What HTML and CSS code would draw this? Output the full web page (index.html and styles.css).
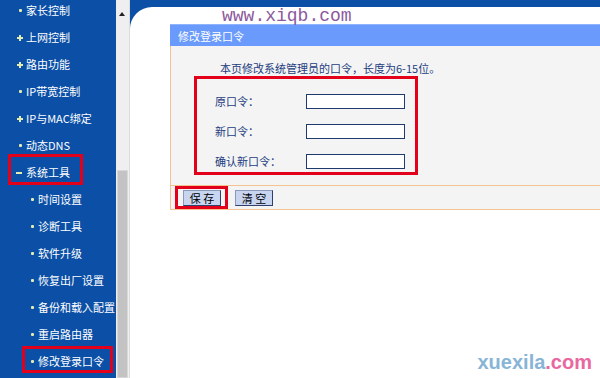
FILE: index.html
```html
<!DOCTYPE html>
<html lang="zh-CN">
<head>
  <meta charset="UTF-8" />
  <title>修改登录口令</title>
  <link rel="stylesheet" href="styles.css">
</head>
<body>
  <div class="nav">
    <ul class="menu">
      <li class="dot">家长控制</li>
      <li class="plus">上网控制</li>
      <li class="plus">路由功能</li>
      <li class="dot">IP带宽控制</li>
      <li class="plus">IP与MAC绑定</li>
      <li class="dot">动态DNS</li>
      <li class="minus">系统工具<span class="mark mark-group"></span></li>
      <li class="sub">时间设置</li>
      <li class="sub">诊断工具</li>
      <li class="sub">软件升级</li>
      <li class="sub">恢复出厂设置</li>
      <li class="sub">备份和载入配置</li>
      <li class="sub">重启路由器</li>
      <li class="sub">修改登录口令<span class="mark mark-item"></span></li>
    </ul>
  </div>

  <div class="scrollbar">
    <div class="scroll-up"></div>
    <div class="scroll-track"></div>
    <div class="scroll-thumb"></div>
  </div>

  <div class="main">
    <div class="page">
      <div class="site-mark">www.xiqb.com</div>

      <div class="panel">
        <div class="panel-title">修改登录口令</div>
        <div class="panel-body">
          <p class="intro">本页修改系统管理员的口令，长度为6-15位。</p>
          <div class="fields">
            <div class="field">
              <label>原口令：</label>
              <input type="password" />
            </div>
            <div class="field">
              <label>新口令：</label>
              <input type="password" />
            </div>
            <div class="field">
              <label>确认新口令：</label>
              <input type="password" />
            </div>
          </div>
        </div>
        <div class="btn-row">
          <span class="btn-mark"><button class="btn">保 存</button></span>
          <button class="btn">清 空</button>
        </div>
      </div>

      <div class="footer-mark"><span class="fm-blue">xuexila</span><span class="fm-pink">.com</span></div>
    </div>
  </div>
</body>
</html>
```

FILE: styles.css
```css
* { box-sizing: border-box; }
html, body { margin: 0; height: 378px; overflow: hidden; }
body { display: flex; font-family: "Noto Sans CJK SC", "Liberation Sans", sans-serif; font-size: 11px; background: #fff; }

/* left menu */
.nav { width: 116px; background: #0b4fa6; color: #fff; }
.menu { list-style: none; margin: -3px 0 0; padding: 0; }
.menu li { position: relative; height: 27px; line-height: 27px; padding-left: 26px; white-space: nowrap; }
.menu li::before { content: ""; position: absolute; background: #e4edb0; }
.menu li.dot::before { left: 19px; top: 12px; width: 3px; height: 3px; border-radius: 1px; }
.menu li.plus::before { left: 17px; top: 13px; width: 6px; height: 2px; box-shadow: 0 0 0 0 #e4edb0; }
.menu li.plus::after { content: ""; position: absolute; left: 19px; top: 11px; width: 2px; height: 6px; background: #e4edb0; }
.menu li.minus::before { left: 16px; top: 13px; width: 6px; height: 2px; }
.menu li.sub { padding-left: 38px; }
.menu li.sub::before { left: 31px; top: 12px; width: 3px; height: 3px; border-radius: 1px; }

.mark { position: absolute; border: 3px solid #e3001b; }
.mark-group { left: 8px; top: -5px; width: 75px; height: 31px; }
.mark-item { left: 22px; top: -2px; width: 91px; height: 27px; }

/* fake scrollbar */
.scrollbar { width: 14px; display: flex; flex-direction: column; background: #efefef; border-right: 1px solid #dcdcdc; }
.scroll-up { height: 22px; position: relative; }
.scroll-up::after { content: ""; position: absolute; left: 3px; top: 12px; border: 3px solid transparent; border-bottom: 4px solid #222; border-top: 0; }
.scroll-track { height: 148px; }
.scroll-thumb { flex: 1; margin: 0 1px; background: #c3c3c3; border: 1px solid #d8d8d8; }

/* content */
.main { flex: 1; background: #0b4fa6; display: flex; flex-direction: column; }
.page { position: relative; flex: 1; margin-top: 7px; background: #fff; border-top-left-radius: 22px; padding: 17px 0 0 40px; }

.site-mark { position: absolute; left: 92px; top: -1px; font-family: "Liberation Mono", monospace; font-size: 18px; color: #8c5a9c; }

.panel { color: #1d3d80; }
.panel-title { height: 22px; line-height: 22px; padding-left: 8px; color: #fff; background: #6a9bfc; border-top: 1px solid #8fb4ff; }
.panel-body { background: #f4f4f4; border-left: 1px solid #f3c48f; border-bottom: 1px solid #f3c48f; padding: 14px 0 10px 23px; }
.intro { margin: 0 0 0 26px; line-height: 16px; }

.fields { width: 224px; height: 99px; border: 3px solid #e3001b; padding: 7px 0 0 18px; }
.field { display: flex; align-items: center; height: 30px; }
.field label { width: 91px; }
.field input { width: 99px; height: 15px; margin: 0; padding: 0; border: 1px solid #1e3a6e; background: #fff; }

.btn-row { display: flex; align-items: center; gap: 7px; height: 24px; background: #f4f4f4; border-left: 1px solid #f3c48f; border-bottom: 1px solid #f3c48f; padding-left: 4px; }
.btn-mark { display: flex; align-items: center; height: 23px; border: 3px solid #e3001b; padding: 0 4px 0 5px; margin-top: 0; }
.btn { height: 16px; width: 38px; padding: 0; font-family: inherit; font-size: 11px; line-height: 14px; color: #000; background: #c8d5f1; border: 1px solid #30406c; border-top-color: #8b98b8; border-left-color: #8b98b8; }

.footer-mark { position: absolute; right: 8px; bottom: 4px; font-family: "Liberation Sans", sans-serif; font-weight: bold; font-size: 20px; }
.fm-blue { color: #88b5d6; }
.fm-pink { color: #e8689f; }
```
